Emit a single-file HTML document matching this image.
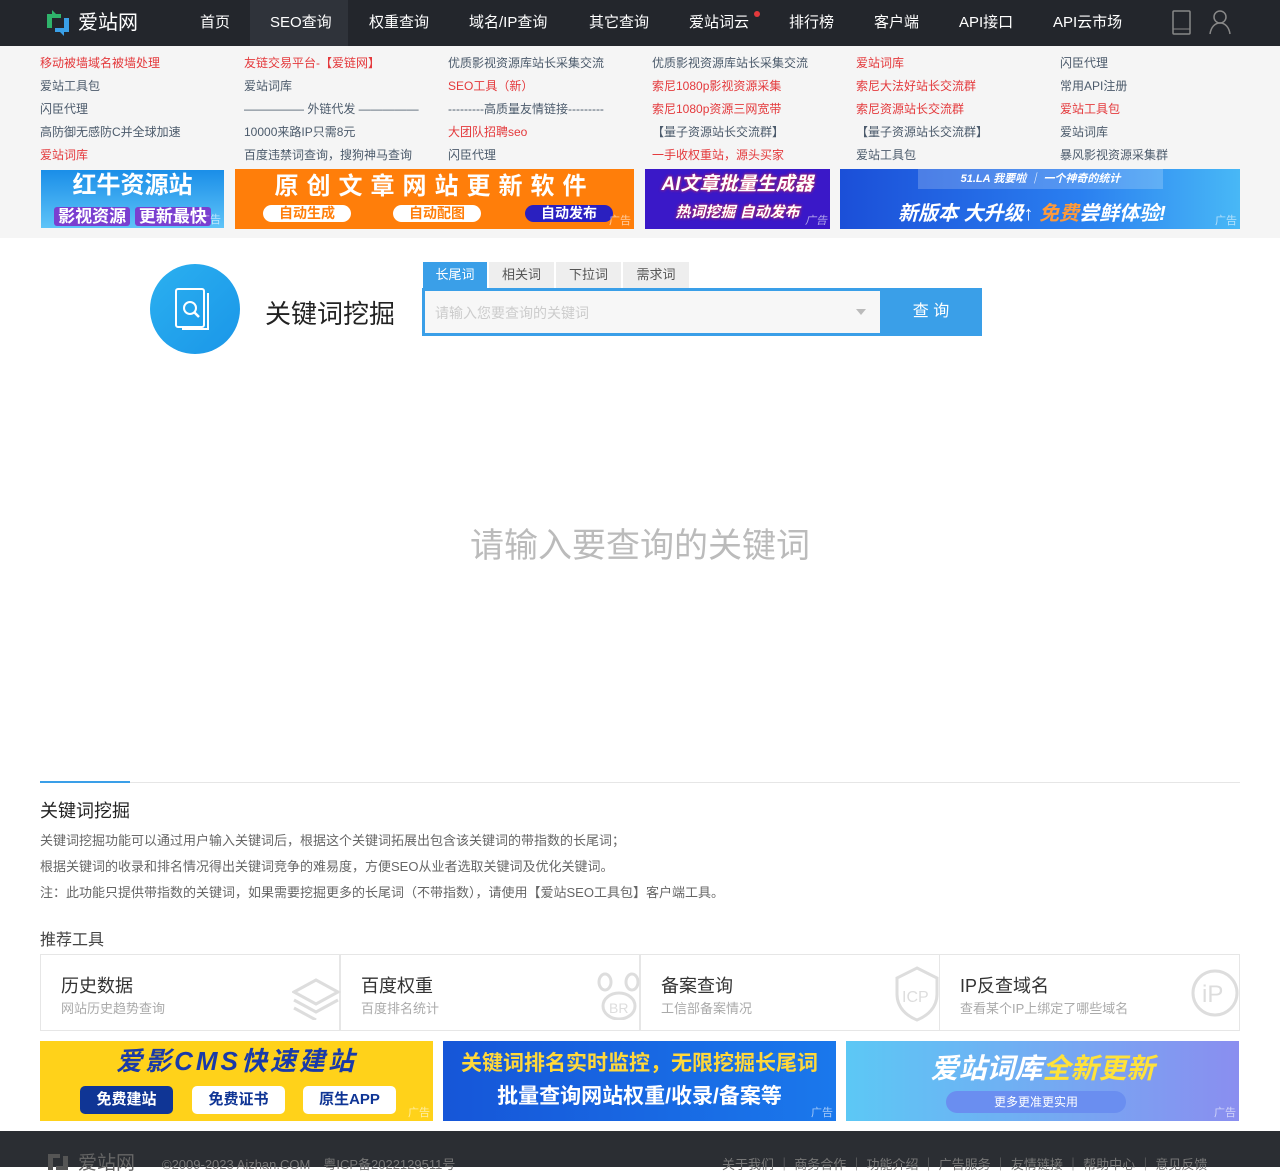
<!DOCTYPE html>
<html><head><meta charset="utf-8"><style>
*{margin:0;padding:0;box-sizing:border-box}
body{width:1280px;height:1167px;overflow:hidden;background:#fff;font-family:"Liberation Sans","Noto Sans CJK SC",sans-serif;color:#333;position:relative}
.hd{position:absolute;left:0;top:0;width:1280px;height:46px;background:#23262c}
.hd .nav{position:absolute;top:0;height:46px;line-height:46px;color:#fff;font-size:15px}
.top{position:absolute;top:46px;left:0;width:1280px;height:192px;background:#f5f5f5}
.l{position:absolute;font-size:12px;color:#4b5a6b;white-space:nowrap}
.r{color:#e4393c}
.ab{position:absolute;color:#fff;font-weight:bold;text-align:center;overflow:hidden}
.ad{position:absolute;right:3px;bottom:1px;font-size:11px;color:rgba(255,255,255,.6);font-weight:normal}
.abs{position:absolute}
.tab{position:absolute;top:262px;height:26px;line-height:26px;font-size:13px;color:#555;background:#eee;text-align:center}
.card{position:absolute;top:954px;height:77px;width:300px;border:1px solid #e6e6e6}
.card b{position:absolute;left:20px;top:17px;font-size:18px;font-weight:normal;color:#333}
.card i{position:absolute;left:20px;top:43px;font-size:13px;font-style:normal;color:#aaa}
p.t{position:absolute;left:40px;font-size:13px;color:#666}
</style></head><body>
<div class="hd">
 <svg class="abs" style="left:45px;top:10px" width="26" height="26" viewBox="0 0 26 26"><path d="M2 4h14v4H7v10H2z" fill="#2fb36b"/><path d="M24 22H10v-4h9V8h5z" fill="#3aa0e8"/><path d="M7 0l6 6H7z" fill="#2fb36b"/><path d="M19 26l-6-6h6z" fill="#3aa0e8"/></svg>
 <div class="nav" style="left:78px;font-size:20px">爱站网</div>
 <div class="abs" style="left:250px;top:0;width:98px;height:46px;background:#2f333a"></div>
 <div class="nav" style="left:200px">首页</div>
 <div class="nav" style="left:270px">SEO查询</div>
 <div class="nav" style="left:369px">权重查询</div>
 <div class="nav" style="left:469px">域名/IP查询</div>
 <div class="nav" style="left:589px">其它查询</div>
 <div class="nav" style="left:689px">爱站词云</div>
 <div class="abs" style="left:754px;top:11px;width:6px;height:6px;border-radius:3px;background:#e4393c"></div>
 <div class="nav" style="left:789px">排行榜</div>
 <div class="nav" style="left:874px">客户端</div>
 <div class="nav" style="left:959px">API接口</div>
 <div class="nav" style="left:1053px">API云市场</div>
 <svg class="abs" style="left:1172px;top:10px" width="20" height="26"><rect x="1" y="1" width="17" height="23" rx="1" fill="none" stroke="#888" stroke-width="1.5"/><line x1="1" y1="19" x2="18" y2="19" stroke="#888"/></svg>
 <svg class="abs" style="left:1208px;top:9px" width="24" height="26"><circle cx="12" cy="8" r="6" fill="none" stroke="#888" stroke-width="1.5"/><path d="M2 25c1-7 5-11 10-11s9 4 10 11" fill="none" stroke="#888" stroke-width="1.5"/></svg>
</div>
<div class="top"></div>
<div class="l r" style="left:40px;top:54px">移动被墙域名被墙处理</div>
<div class="l" style="left:40px;top:77px">爱站工具包</div>
<div class="l" style="left:40px;top:100px">闪臣代理</div>
<div class="l" style="left:40px;top:123px">高防御无感防C并全球加速</div>
<div class="l r" style="left:40px;top:146px">爱站词库</div>
<div class="l r" style="left:244px;top:54px">友链交易平台-【爱链网】</div>
<div class="l" style="left:244px;top:77px">爱站词库</div>
<div class="l" style="left:244px;top:100px">————— 外链代发 —————</div>
<div class="l" style="left:244px;top:123px">10000来路IP只需8元</div>
<div class="l" style="left:244px;top:146px">百度违禁词查询，搜狗神马查询</div>
<div class="l" style="left:448px;top:54px">优质影视资源库站长采集交流</div>
<div class="l r" style="left:448px;top:77px">SEO工具（新）</div>
<div class="l" style="left:448px;top:100px">---------高质量友情链接---------</div>
<div class="l r" style="left:448px;top:123px">大团队招聘seo</div>
<div class="l" style="left:448px;top:146px">闪臣代理</div>
<div class="l" style="left:652px;top:54px">优质影视资源库站长采集交流</div>
<div class="l r" style="left:652px;top:77px">索尼1080p影视资源采集</div>
<div class="l r" style="left:652px;top:100px">索尼1080p资源三网宽带</div>
<div class="l" style="left:652px;top:123px">【量子资源站长交流群】</div>
<div class="l r" style="left:652px;top:146px">一手收权重站，源头买家</div>
<div class="l r" style="left:856px;top:54px">爱站词库</div>
<div class="l r" style="left:856px;top:77px">索尼大法好站长交流群</div>
<div class="l r" style="left:856px;top:100px">索尼资源站长交流群</div>
<div class="l" style="left:856px;top:123px">【量子资源站长交流群】</div>
<div class="l" style="left:856px;top:146px">爱站工具包</div>
<div class="l" style="left:1060px;top:54px">闪臣代理</div>
<div class="l" style="left:1060px;top:77px">常用API注册</div>
<div class="l r" style="left:1060px;top:100px">爱站工具包</div>
<div class="l" style="left:1060px;top:123px">爱站词库</div>
<div class="l" style="left:1060px;top:146px">暴风影视资源采集群</div>

<div class="ab" style="left:41px;top:170px;width:183px;height:58px;background:linear-gradient(#1a8ee8,#5fc4f8)"><div style="font-size:24px;line-height:32px">红牛资源站</div><div style="font-size:17px;color:#fff;"><span style="background:#7a3fd0;padding:0 4px;border-radius:3px">影视资源</span> <span style="background:#7a3fd0;padding:0 4px;border-radius:3px">更新最快</span></div><span class="ad">广告</span></div>
<div class="ab" style="left:235px;top:169px;width:399px;height:60px;background:#ff7e0a"><div style="font-size:24px;line-height:36px;letter-spacing:8px">原创文章网站更新软件</div><span style="position:absolute;left:28px;top:36px;width:88px;height:17px;border-radius:9px;background:#fff;color:#ff7e0a;font-size:14px;line-height:17px">自动生成</span><span style="position:absolute;left:158px;top:36px;width:88px;height:17px;border-radius:9px;background:#fff;color:#ff7e0a;font-size:14px;line-height:17px">自动配图</span><span style="position:absolute;left:290px;top:36px;width:88px;height:17px;border-radius:9px;background:#2a20c0;font-size:14px;line-height:17px">自动发布</span><span class="ad">广告</span></div>
<div class="ab" style="left:645px;top:169px;width:185px;height:60px;background:#3a18c8;font-style:italic"><div style="font-size:19px;line-height:32px;color:#fff;text-shadow:0 0 3px #e33">AI文章批量生成器</div><div style="font-size:15px;text-shadow:0 0 3px #e33">热词挖掘 自动发布</div><span class="ad">广告</span></div>
<div class="ab" style="left:840px;top:169px;width:400px;height:60px;background:linear-gradient(90deg,#1b4fd8,#2a7ff0 60%,#48b8f6)"><div style="position:absolute;left:78px;top:0;width:245px;height:20px;background:rgba(255,255,255,.2);font-size:11px;line-height:20px;font-style:italic">51.LA 我要啦 ｜ 一个神奇的统计</div><div style="position:absolute;left:58px;top:28px;font-size:20px;font-style:italic">新版本 大升级↑ <span style="color:#ff9a3a">免费</span>尝鲜体验!</div><span class="ad">广告</span></div>

<div class="abs" style="left:150px;top:264px;width:90px;height:90px;border-radius:45px;background:linear-gradient(135deg,#2bb0f0,#1a96e8)"></div>
<svg class="abs" style="left:172px;top:286px" width="46" height="46" viewBox="0 0 46 46"><rect x="4" y="3" width="28" height="38" rx="2" fill="none" stroke="#fff" stroke-width="2"/><path d="M36 7v36H10" fill="none" stroke="#fff" stroke-width="2"/><circle cx="18" cy="22" r="6" fill="none" stroke="#fff" stroke-width="2"/><path d="M22 26l5 5" stroke="#fff" stroke-width="2.5"/></svg>
<div class="abs" style="left:265px;top:294px;font-size:26px;color:#222">关键词挖掘</div>
<div class="tab" style="left:423px;width:64px;background:#3a9fe8;color:#fff">长尾词</div>
<div class="tab" style="left:489px;width:65px">相关词</div>
<div class="tab" style="left:556px;width:65px">下拉词</div>
<div class="tab" style="left:623px;width:66px">需求词</div>
<div class="abs" style="left:422px;top:288px;width:560px;height:48px;background:#3a9fe8"></div>
<div class="abs" style="left:425px;top:291px;width:455px;height:42px;background:#f7f7f7;font-size:14px;color:#ccc;line-height:44px;padding-left:10px">请输入您要查询的关键词</div>
<div class="abs" style="left:856px;top:309px;border:5px solid transparent;border-top:6px solid #bbb"></div>
<div class="abs" style="left:880px;top:288px;width:102px;height:48px;line-height:48px;color:#fff;font-size:16px;text-align:center">查 询</div>

<div class="abs" style="left:0;top:518px;width:1280px;text-align:center;font-size:34px;color:#bbb">请输入要查询的关键词</div>

<div class="abs" style="left:40px;top:782px;width:1200px;height:1px;background:#e6e6e6"></div>
<div class="abs" style="left:40px;top:781px;width:90px;height:2px;background:#3a9fe8"></div>
<div class="abs" style="left:40px;top:797px;font-size:18px;color:#222">关键词挖掘</div>
<p class="t" style="top:830px">关键词挖掘功能可以通过用户输入关键词后，根据这个关键词拓展出包含该关键词的带指数的长尾词；</p>
<p class="t" style="top:856px">根据关键词的收录和排名情况得出关键词竞争的难易度，方便SEO从业者选取关键词及优化关键词。</p>
<p class="t" style="top:882px">注：此功能只提供带指数的关键词，如果需要挖掘更多的长尾词（不带指数），请使用【爱站SEO工具包】客户端工具。</p>
<div class="abs" style="left:40px;top:926px;font-size:16px;color:#444">推荐工具</div>
<div class="card" style="left:40px"><b>历史数据</b><i>网站历史趋势查询</i></div>
<div class="card" style="left:340px"><b>百度权重</b><i>百度排名统计</i></div>
<div class="card" style="left:640px"><b>备案查询</b><i>工信部备案情况</i></div>
<div class="card" style="left:939px;width:301px"><b>IP反查域名</b><i>查看某个IP上绑定了哪些域名</i></div>
<svg class="abs" style="left:292px;top:968px" width="50" height="52"><path d="M2 24l22-12 22 12-22 12z M2 32l22 12 22-12 M2 40l22 12" fill="none" stroke="#ddd" stroke-width="3"/></svg>
<svg class="abs" style="left:596px;top:968px" width="46" height="52"><ellipse cx="9" cy="14" rx="6" ry="8" fill="none" stroke="#ddd" stroke-width="3"/><ellipse cx="36" cy="14" rx="6" ry="8" fill="none" stroke="#ddd" stroke-width="3"/><ellipse cx="23" cy="38" rx="16" ry="13" fill="none" stroke="#ddd" stroke-width="3"/><text x="13" y="45" font-size="14" fill="#ddd">BR</text></svg>
<svg class="abs" style="left:894px;top:966px" width="46" height="56"><path d="M23 2l20 10v16c0 14-10 22-20 26C13 50 3 42 3 28V12z" fill="none" stroke="#ddd" stroke-width="3"/><text x="8" y="36" font-size="16" fill="#ddd">ICP</text></svg>
<svg class="abs" style="left:1190px;top:968px" width="50" height="50"><circle cx="25" cy="25" r="22" fill="none" stroke="#ddd" stroke-width="3"/><text x="12" y="34" font-size="24" fill="#ddd">iP</text></svg>

<div class="ab" style="left:40px;top:1041px;width:393px;height:80px;background:#ffd21a"><div style="font-size:26px;line-height:40px;color:#1a3aa8;font-style:italic;letter-spacing:3px">爱影CMS快速建站</div><span style="position:absolute;left:40px;top:45px;width:93px;height:28px;border-radius:5px;background:#0f3595;font-size:15px;line-height:28px">免费建站</span><span style="position:absolute;left:152px;top:45px;width:93px;height:28px;border-radius:5px;background:#fff;color:#0f3595;font-size:15px;line-height:28px">免费证书</span><span style="position:absolute;left:263px;top:45px;width:93px;height:28px;border-radius:5px;background:#fff;color:#0f3595;font-size:15px;line-height:28px">原生APP</span><span class="ad">广告</span></div>
<div class="ab" style="left:443px;top:1041px;width:393px;height:80px;background:linear-gradient(90deg,#1656d8,#1a78ec)"><div style="font-size:21px;line-height:46px;color:#ffd83a">关键词排名实时监控，无限挖掘长尾词</div><div style="font-size:21px;line-height:20px">批量查询网站权重/收录/备案等</div><span class="ad">广告</span></div>
<div class="ab" style="left:846px;top:1041px;width:393px;height:80px;background:linear-gradient(90deg,#5cc8f5,#8a8ef0)"><div style="font-size:28px;line-height:56px;font-style:italic">爱站词库<span style="color:#ffe23a">全新更新</span></div><div style="position:absolute;left:100px;top:50px;width:180px;height:22px;border-radius:11px;background:#6a8ef0;font-size:12px;line-height:22px;font-weight:normal">更多更准更实用</div><span class="ad">广告</span></div>

<div class="abs" style="left:0;top:1131px;width:1280px;height:36px;background:#2b2e33"></div>
<svg class="abs" style="left:46px;top:1150px" width="24" height="20"><path d="M2 4h12v4H7v12H2z" fill="#555"/><path d="M22 20H10v-4h7V6h5z" fill="#555"/></svg>
<div class="abs" style="left:78px;top:1148px;font-size:19px;color:#666">爱站网</div>
<div class="abs" style="left:162px;top:1154px;font-size:13px;color:#777">©2009-2023 Aizhan.COM　粤ICP备2022129511号</div>
<div class="abs" style="left:722px;top:1154px;font-size:13px;color:#777">关于我们 ｜ 商务合作 ｜ 功能介绍 ｜ 广告服务 ｜ 友情链接 ｜ 帮助中心 ｜ 意见反馈</div>
</body></html>
